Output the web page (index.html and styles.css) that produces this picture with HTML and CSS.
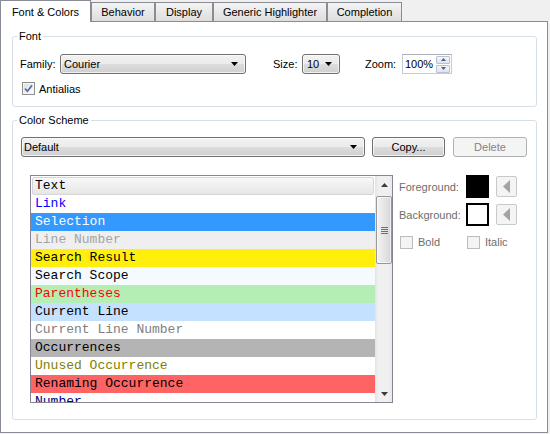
FILE: index.html
```html
<!DOCTYPE html>
<html>
<head>
<meta charset="utf-8">
<link rel="stylesheet" href="styles.css">
</head>
<body>
<div class="window">
  <div class="tabs">
    <div class="tab tab-active w-font">Font &amp; Colors</div>
    <div class="tab w-beh">Behavior</div>
    <div class="tab w-disp">Display</div>
    <div class="tab w-gen">Generic Highlighter</div>
    <div class="tab w-comp">Completion</div>
  </div>
  <div class="pane">
    <fieldset class="group group-font">
      <legend>Font</legend>
      <div class="font-row">
        <span class="lbl lbl-family">Family:</span>
        <div class="combo combo-family"><span>Courier</span><svg class="arrow" width="7" height="4" viewBox="0 0 7 4"><path d="M0 0H7L3.5 4Z" fill="#000"/></svg></div>
        <span class="lbl lbl-size">Size:</span>
        <div class="combo combo-size"><span>10</span><svg class="arrow" width="7" height="4" viewBox="0 0 7 4"><path d="M0 0H7L3.5 4Z" fill="#000"/></svg></div>
        <span class="lbl lbl-zoom">Zoom:</span>
        <div class="spin">
          <span class="spin-val">100%</span>
          <div class="spin-btns">
            <div class="spin-btn"><svg width="5" height="3" viewBox="0 0 5 3"><path d="M2.5 0L5 3H0Z" fill="#4d6185"/></svg></div>
            <div class="spin-btn"><svg width="5" height="3" viewBox="0 0 5 3"><path d="M0 0H5L2.5 3Z" fill="#4d6185"/></svg></div>
          </div>
        </div>
      </div>
      <div class="check-row">
        <span class="checkbox"><svg width="9" height="9" viewBox="0 0 9 9"><path d="M1 4.6L3.4 7.2L8 1.4" stroke="#5a6ea6" stroke-width="1.7" fill="none"/></svg></span>
        <span>Antialias</span>
      </div>
    </fieldset>
    <fieldset class="group group-scheme">
      <legend>Color Scheme</legend>
      <div class="scheme-row">
        <div class="combo combo-scheme"><span>Default</span><svg class="arrow" width="7" height="4" viewBox="0 0 7 4"><path d="M0 0H7L3.5 4Z" fill="#000"/></svg></div>
        <div class="btn btn-copy">Copy...</div>
        <div class="btn btn-delete">Delete</div>
      </div>
      <div class="editor">
        <div class="list">
          <div class="rows">
            <div class="row row-text">Text</div>
            <div class="row c-link">Link</div>
            <div class="row c-sel">Selection</div>
            <div class="row c-lnum">Line Number</div>
            <div class="row c-search">Search Result</div>
            <div class="row c-scope">Search Scope</div>
            <div class="row c-paren">Parentheses</div>
            <div class="row c-curline">Current Line</div>
            <div class="row c-curlnum">Current Line Number</div>
            <div class="row c-occ">Occurrences</div>
            <div class="row c-unused">Unused Occurrence</div>
            <div class="row c-rename">Renaming Occurrence</div>
            <div class="row c-number">Number</div>
          </div>
          <div class="scrollbar">
            <div class="sb-btn"><svg width="7" height="4" viewBox="0 0 7 4"><path d="M3.5 0L7 4H0Z" fill="#3c3c3c"/></svg></div>
            <div class="sb-thumb"><svg width="7" height="7" viewBox="0 0 7 7"><path d="M0 0.5H7M0 2.5H7M0 4.5H7M0 6.5H7" stroke="#6f6f6f" stroke-width="1"/></svg></div>
            <div class="sb-space"></div>
            <div class="sb-btn"><svg width="7" height="4" viewBox="0 0 7 4"><path d="M0 0H7L3.5 4Z" fill="#3c3c3c"/></svg></div>
          </div>
        </div>
        <div class="props">
          <div class="prop-row">
            <span class="plbl">Foreground:</span>
            <span class="swatch swatch-fg"></span>
            <span class="abtn"><svg width="7" height="13" viewBox="0 0 7 13"><path d="M7 0V13L0 6.5Z" fill="#a3a3a3"/></svg></span>
          </div>
          <div class="prop-row prop-row2">
            <span class="plbl">Background:</span>
            <span class="swatch swatch-bg"></span>
            <span class="abtn"><svg width="7" height="13" viewBox="0 0 7 13"><path d="M7 0V13L0 6.5Z" fill="#a3a3a3"/></svg></span>
          </div>
          <div class="prop-row prop-row3">
            <span class="chk-item"><span class="checkbox checkbox-dis"></span><span class="plbl-t">Bold</span></span>
            <span class="chk-item"><span class="checkbox checkbox-dis"></span><span class="plbl-t">Italic</span></span>
          </div>
        </div>
      </div>
    </fieldset>
  </div>
</div>
</body>
</html>
```
FILE: styles.css
```css
html, body {
  margin: 0;
  padding: 0;
}
body {
  background: #f0f0f0;
  font-family: "Liberation Sans", Arial, sans-serif;
  font-size: 11px;
  color: #000;
  width: 550px;
  height: 434px;
  overflow: hidden;
}
.window {
  width: 548px;
}
.tabs {
  display: flex;
  align-items: flex-end;
  height: 21px;
}
.tab {
  box-sizing: border-box;
  height: 19px;
  border: 1px solid #898c95;
  border-bottom: none;
  background: linear-gradient(#f4f4f4, #e6e6e6 60%, #dedede);
  text-align: center;
  line-height: 18px;
}
.tab-active {
  position: relative;
  z-index: 1;
  height: 22px;
  margin-bottom: -1px;
  background: #fff;
  line-height: 22px;
}
.w-font { width: 91px; }
.w-beh { width: 64px; }
.w-disp { width: 58px; }
.w-gen { width: 114px; }
.w-comp { width: 75px; }

.pane {
  box-sizing: border-box;
  width: 548px;
  height: 412px;
  border: 1px solid #898c95;
  background: #fff;
  padding: 0 10px 0 11px;
}

.group {
  margin: 8px 0 0;
  padding: 11px 0;
  border: 1px solid #d5dfe5;
  border-radius: 3px;
  min-width: 0;
}
.group legend {
  margin-left: 4px;
  padding: 0 2px;
  line-height: 13px;
}
.group-scheme {
  margin-top: 7px;
  padding: 10px 0 16px;
}

.font-row {
  display: flex;
  align-items: center;
  padding-left: 7px;
  height: 20px;
}
.lbl-family { width: 40px; }
.lbl-size { margin-left: 27px; width: 29px; }
.lbl-zoom { margin-left: 25px; width: 37px; }

.combo {
  box-sizing: border-box;
  height: 20px;
  border: 1px solid #707070;
  border-radius: 3px;
  background: linear-gradient(#f2f2f2 0%, #ebebeb 50%, #dddddd 50%, #cfcfcf 100%);
  box-shadow: inset 0 0 0 1px rgba(255,255,255,0.7);
  display: flex;
  align-items: center;
  justify-content: space-between;
  padding: 0 7px 0 3px;
}
.combo-family { width: 186px; }
.combo-size { width: 38px; padding-left: 4px; }
.combo-scheme { width: 344px; padding-left: 2px; }
.arrow { display: block; }

.spin {
  box-sizing: border-box;
  width: 50px;
  height: 20px;
  border: 1px solid #c5cbd4;
  border-top-color: #abadb3;
  background: #fff;
  display: flex;
  align-items: center;
  justify-content: space-between;
  padding: 0 1px 0 2px;
}
.spin-btns {
  display: flex;
  flex-direction: column;
  gap: 1px;
}
.spin-btn {
  box-sizing: border-box;
  width: 14px;
  height: 8px;
  border: 1px solid #b8c2d6;
  border-radius: 1px;
  background: linear-gradient(#f4f6fa, #dde3ee);
  display: flex;
  align-items: center;
  justify-content: center;
}
.spin-btn svg { display: block; }

.check-row {
  display: flex;
  align-items: center;
  margin-top: 8px;
  padding-left: 9px;
  height: 13px;
}
.checkbox {
  box-sizing: border-box;
  width: 13px;
  height: 13px;
  border: 1px solid #8e8f8f;
  background: linear-gradient(135deg, #dcdcdc, #ffffff);
  box-shadow: inset 0 0 0 1px #f4f4f4;
  display: flex;
  align-items: center;
  justify-content: center;
  margin-right: 4px;
  flex: none;
}
.checkbox svg { display: block; }
.checkbox-dis {
  border-color: #bcbcbc;
  background: #f4f4f4;
  box-shadow: none;
  margin-right: 5px;
}

.scheme-row {
  display: flex;
  padding-left: 8px;
}
.btn {
  box-sizing: border-box;
  height: 20px;
  border: 1px solid #707070;
  border-radius: 3px;
  background: linear-gradient(#f2f2f2 0%, #ebebeb 50%, #dddddd 50%, #cfcfcf 100%);
  box-shadow: inset 0 0 0 1px rgba(255,255,255,0.7);
  text-align: center;
  line-height: 18px;
}
.btn-copy { width: 73px; margin-left: 7px; }
.btn-delete {
  width: 74px;
  margin-left: 8px;
  border-color: #adb2b5;
  background: #f4f4f4;
  box-shadow: none;
  color: #838383;
}

.editor {
  display: flex;
  align-items: flex-start;
  margin-top: 18px;
  padding-left: 17px;
}
.list {
  box-sizing: border-box;
  width: 363px;
  height: 228px;
  border: 1px solid #828790;
  background: #fff;
  display: flex;
  overflow: hidden;
}
.rows {
  width: 344px;
  padding-top: 1px;
  font-family: "Liberation Mono", "Courier New", monospace;
  font-size: 13px;
}
.row {
  height: 18px;
  line-height: 18px;
  padding-left: 4px;
  white-space: nowrap;
}
.row-text {
  box-sizing: border-box;
  margin: 0 1px;
  padding-left: 2px;
  border: 1px solid #d6d6d6;
  border-radius: 2px;
  line-height: 16px;
  background: linear-gradient(#f8f8f8, #e6e6e6);
}
.c-link { color: #0000ff; }
.c-sel { background: #3399ff; color: #fff; }
.c-lnum { background: #efefef; color: #a4a4a4; }
.c-search { background: #ffef0b; }
.c-scope { background: #f5faff; }
.c-paren { background: #b4eeb4; color: #ff0000; }
.c-curline { background: #c4e1ff; }
.c-curlnum { color: #808080; }
.c-occ { background: #b4b4b4; }
.c-unused { color: #808000; }
.c-rename { background: #ff6464; }
.c-number { color: #000080; }

.scrollbar {
  box-sizing: border-box;
  width: 17px;
  height: 226px;
  background: linear-gradient(90deg, #e3e3e3, #f0f0f0 20%, #f0f0f0 80%, #e8e8e8);
  display: flex;
  flex-direction: column;
  align-items: center;
  padding-left: 1px;
}
.sb-btn {
  width: 16px;
  height: 17px;
  display: flex;
  align-items: center;
  justify-content: center;
  flex: none;
}
.sb-btn svg { display: block; }
.sb-thumb {
  box-sizing: border-box;
  margin-top: 3px;
  width: 16px;
  height: 68px;
  border: 1px solid #979797;
  border-radius: 2px;
  background: linear-gradient(90deg, #f3f3f3, #e6e6e6 50%, #d6d6d6);
  box-shadow: inset 0 0 0 1px rgba(255,255,255,0.6);
  display: flex;
  align-items: center;
  justify-content: center;
  flex: none;
}
.sb-thumb svg { display: block; }
.sb-space { flex: 1; }

.props {
  margin-left: 6px;
  color: #6d6d6d;
}
.prop-row {
  display: flex;
  align-items: center;
  height: 23px;
}
.prop-row2 { margin-top: 5px; }
.prop-row3 { margin-top: 10px; height: 13px; }
.plbl { width: 67px; }
.swatch {
  box-sizing: border-box;
  width: 23px;
  height: 23px;
  flex: none;
}
.swatch-fg { background: #000; }
.swatch-bg { background: #fff; border: 2px solid #000; }
.abtn {
  box-sizing: border-box;
  width: 21px;
  height: 21px;
  margin-left: 7px;
  border: 1px solid #c9c9c9;
  border-radius: 2px;
  background: #f4f4f4;
  display: flex;
  align-items: center;
  justify-content: center;
}
.abtn svg { display: block; }
.chk-item {
  display: flex;
  align-items: center;
  width: 66px;
  padding-left: 1px;
}
.plbl-t { line-height: 13px; }
```
